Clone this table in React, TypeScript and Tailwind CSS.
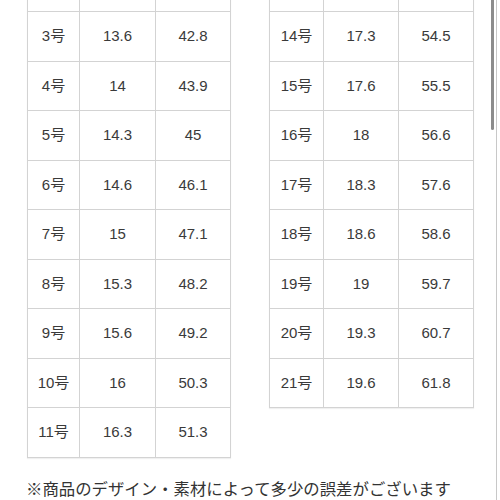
const left: [string, string, string][] = [
  ['', '', ''],
  ['3号', '13.6', '42.8'],
  ['4号', '14', '43.9'],
  ['5号', '14.3', '45'],
  ['6号', '14.6', '46.1'],
  ['7号', '15', '47.1'],
  ['8号', '15.3', '48.2'],
  ['9号', '15.6', '49.2'],
  ['10号', '16', '50.3'],
  ['11号', '16.3', '51.3'],
]

const right: [string, string, string][] = [
  ['', '', ''],
  ['14号', '17.3', '54.5'],
  ['15号', '17.6', '55.5'],
  ['16号', '18', '56.6'],
  ['17号', '18.3', '57.6'],
  ['18号', '18.6', '58.6'],
  ['19号', '19', '59.7'],
  ['20号', '19.3', '60.7'],
  ['21号', '19.6', '61.8'],
]

function SizeTable({ rows, cols }: { rows: [string, string, string][]; cols: string[] }) {
  return (
    <table className="border-collapse shadow-[0_1px_1px_rgba(0,0,0,0.06)]">
      <colgroup>
        {cols.map((c, i) => (
          <col key={i} className={c} />
        ))}
      </colgroup>
      <tbody>
        {rows.map((r, ri) => (
          <tr key={ri} className="h-[49.5px]">
            {r.map((c, i) => (
              <td key={i} className="border border-[#d3d3d3] p-0 text-center align-middle">
                {c}
              </td>
            ))}
          </tr>
        ))}
      </tbody>
    </table>
  )
}

export default function App() {
  return (
    <div
      className="relative h-[500px] w-[500px] overflow-hidden bg-white text-[15px] text-[#3a3a3a]"
      style={{ fontFamily: '"Liberation Sans", "Noto Sans CJK JP", sans-serif' }}
    >
      <div className="mt-[-38.5px] flex items-start gap-[38px] pl-[27px]">
        <SizeTable rows={left} cols={['w-[52px]', 'w-[76px]', 'w-[75px]']} />
        <SizeTable rows={right} cols={['w-[54px]', 'w-[75px]', 'w-[75px]']} />
      </div>
      <p className="mt-[19px] pl-[26px] text-[16.4px] leading-6 text-[#333]">
        ※商品のデザイン・素材によって多少の誤差がございます
      </p>
      {/* scroll indicator */}
      <div className="absolute left-[491px] top-0 h-[130px] w-[3px] rounded-b-full bg-[#8c8c8c]" />
      <div className="absolute left-[496px] top-0 h-full w-px bg-[#c8c8c8]" />
    </div>
  )
}
